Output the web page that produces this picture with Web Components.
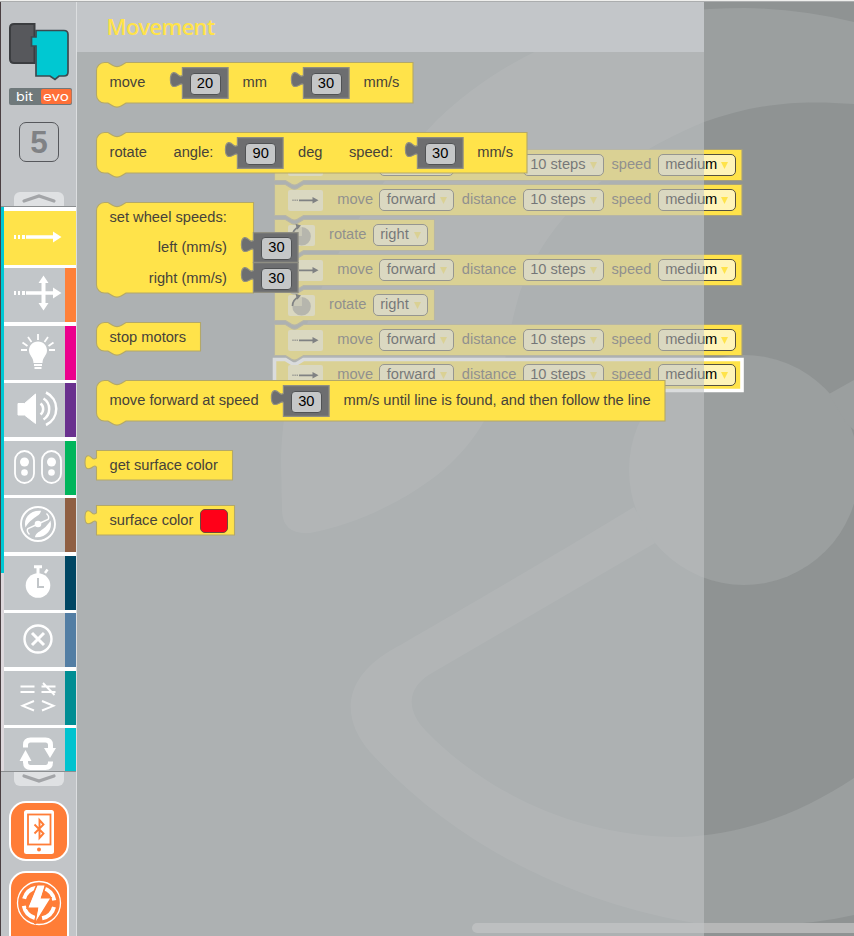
<!DOCTYPE html>
<html lang="en"><head><meta charset="utf-8"><title>Movement blocks</title>
<style>
html,body{margin:0;height:100%;overflow:hidden}
body{font:14.67px "Liberation Sans",Arial,sans-serif;background:#8f9393}
</style></head><body>
<block-editor></block-editor>
<script>
const define=(name,css,html,setup)=>customElements.define(name,class extends HTMLElement{
  constructor(){super();this.attachShadow({mode:'open'});}
  connectedCallback(){
    const g=this.getAttribute('g'),w=this.getAttribute('w');
    if(g)this.style.marginLeft=g+'px';
    if(w)this.style.width=w+'px';
    this.shadowRoot.innerHTML='<style>'+css+'</style>'+(typeof html==='function'?html(this):html);
    if(setup)setup(this);
  }
});

/* Text and fields that sit inside a block */
define('b-label',':host{display:block;flex:none;line-height:20px;white-space:nowrap;color:#46423a;margin-top:var(--label-top,10px)}','<slot></slot>');
define('b-num',`:host{display:block;flex:none;position:relative;width:46.5px;height:32px;margin-top:var(--num-top,5px)}
svg{position:absolute;left:-13px;top:0;overflow:visible}
.f{position:relative;margin:5.7px 0 0 8px;width:31px;height:22.6px;box-sizing:border-box;border:1.3px solid #505254;border-radius:4px;background:#c5c7c8;color:#000;text-align:center;line-height:18.4px}`,
el=>{const w=+(el.getAttribute('w')||46.5),h=+(el.getAttribute('h')||32);
return `<svg width="${w+13}" height="${h}"><path d="M13.4.6H${w+12.6}V${h-.6}H13.4V18.500C13 14.500 9 19.500 5 19.500C.3 19.500.3 6.500 4.500 5.700C8.500 5 10 11.500 13.400 8.500Z" fill="#6d6e70" stroke="#8f8e83" stroke-width="1.2"/></svg><div class="f"><slot></slot></div>`});
define('b-color',':host{display:block;flex:none;box-sizing:border-box;width:28px;height:23.500px;margin-top:4px;background:#ff0018;border:1.300px solid #6d4a3a;border-radius:5px}','');
define('b-drop',`:host{display:flex;flex:none;box-sizing:border-box;height:22px;margin-top:4.500px;border:1.300px solid #55513f;border-radius:5px;background:#fff4b8;color:#000;line-height:19.500px;padding-left:6.200px;justify-content:space-between;align-items:flex-start}
svg{margin:7.200px 6.500px 0 0}`,'<slot></slot><svg width="7" height="7"><path d="M0 0H7L3.500 7Z" fill="#ffe34a"/></svg>');
define('b-move-icon',':host{display:block;flex:none;width:35px;height:21px;margin-top:6px;background:#fff4b8;border-radius:2px}',
'<svg width="35" height="21" style="display:block"><g fill="#1e1e20"><path d="M4.500 9.500h1v1.600h-1zM6.600 9.500h1v1.600h-1zM8.700 9.500h1v1.600h-1zM11 9.500h14v1.700h-14zM24.500 7L30.500 10.300L24.500 13.600Z"/></g></svg>');
define('b-turn-icon',':host{display:block;flex:none;width:27px;height:21.500px;margin-top:5.500px;background:#fff4b8;border-radius:2px}',
'<svg width="27" height="22" style="display:block;overflow:visible"><path d="M13.500 2A9.300 9.300 0 1 1 4.300 11H13.500Z" fill="#a5a187"/><path d="M13.500 2A9.300 9.300 0 0 0 4.300 11H13.500Z" fill="#d8d0a0"/><path d="M4.500 11C4.500 7 7 3.500 11 2" fill="none" stroke="#1e1e20" stroke-width="1.700"/><path d="M7.500-1.200L13 .6L9 4.800Z" fill="#1e1e20"/></svg>');

/* Block body: stack blocks have a notch and a bump, value blocks a left tab */
define('b-block',`:host{display:block;position:relative;flex:none}
svg{position:absolute;left:0;top:0;overflow:visible}
.r{position:relative;display:flex;align-items:flex-start;height:100%}
:host([kind=col]) .r{display:block}
:host([kind=ws]),:host([kind=sel]){--label-top:5px}
:host([kind=value]){--label-top:5px}
:host([kind=small]){--label-top:5px}`,
el=>{const w=+el.getAttribute('w'),h=+el.getAttribute('h'),k=el.getAttribute('kind');
el.style.height=h+'px';
let d,extra='';
if(k==='value')d=`M.5.5H${w-.5}V${h-.5}H.5V17.500C0 15.500-2 15.500-4 17.500C-5 18.500-6.500 18.800-8 18.800C-12 18.500-12 6-8 5.700C-5 5.500-4.500 9-1.500 9L.5 8Z`;
else if(k==='ws'||k==='sel'){d=`M.5.5H11.500L17.500 4.200Q20.500 6 23.500 4.200L29.500.5H${w-.5}V${h-.5}H29.500L23.500 ${h+3.200}Q20.500 ${h+5} 17.500 ${h+3.200}L11.500 ${h-.5}H.5Z`;
 if(k==='sel')extra=`<path d="M.5.5H11.500L17.500 4.200Q20.500 6 23.500 4.200L29.500.5H${w-.5}V${h-.5}H.5Z" fill="none" stroke="#fff" stroke-width="3.600"/>`;}
else d=`M.5 8.500A8 8 0 0 1 8.500.5H12L16.500 3.300Q21 6 25.500 3.300L30 .5H${w-.5}V${h-.5}H30L25.500 ${h+2.300}Q21 ${h+5} 16.500 ${h+2.300}L12 ${h-.5}H8.500A8 8 0 0 1 .5 ${h-8.500}Z`;
return `<svg width="${w}" height="${h}"><path d="${d}" fill="#ffe34a" stroke="${k==='sel'?'#fff0a0':k==='ws'?'#a8a078':'#b3a868'}" stroke-width="1.100"/>${extra}</svg><div class="r"><slot></slot></div>`});
define('b-row',':host{display:flex;align-items:flex-start;width:203px;justify-content:flex-end;--num-top:0;--label-top:5.500px;height:30.500px}','<slot></slot>');

/* Workspace canvas with the watermark and the user program */
const mv=k=>`<b-block kind="${k}" w="468.500" h="32"><b-move-icon g="14"></b-move-icon><b-label g="14.700" w="36">move</b-label><b-drop g="6.300" w="75">forward</b-drop><b-label g="7.300" w="54">distance</b-label><b-drop g="7.200" w="81.500">10 steps</b-drop><b-label g="7" w="40">speed</b-label><b-drop g="6.500" w="78">medium</b-drop></b-block>`;
const rot='<b-block kind="ws" w="161" h="32"><b-turn-icon g="14"></b-turn-icon><b-label g="14.500" w="37">rotate</b-label><b-drop g="7" w="55">right</b-drop></b-block>';
define('work-space',`:host{display:block;position:absolute;inset:0;background:#8f9393;overflow:hidden}
.bg{position:absolute;inset:0}
.prog{position:absolute;left:273.500px;top:149.300px;display:flex;flex-direction:column;gap:3px}
.bar{position:absolute;left:472px;right:0;bottom:3px;height:10px;border-radius:5px 0 0 5px;background:#b6b7b7}`,
`<svg class="bg" width="854" height="936"><g fill="#9b9f9f">
<path d="M281 460C283 370 320 240 437 120C510 50 610 8 745 8Q800 9 854 22V104C790 99 750 106 704 122C600 165 545 225 520 292C510 325 507 350 503 372C498 402 478 438 450 464C412 499 355 525 310 533Q283 535 282 511Z"/>
<circle cx="744" cy="470" r="115"/>
<path d="M829 394L854 380V430L846 423ZM634 507L655 543L432 673C406 688 406 710 426 731C480 787 570 837 680 837C745 835 803 812 854 778V915Q790 930 700 924C580 905 460 850 370 752C344 722 340 684 385 654C430 628 520 576 634 507Z"/></g></svg>
<div class="prog">${mv('ws')+mv('ws')+rot+mv('ws')+rot+mv('ws')+mv('sel')}</div><div class="bar"></div>`);

/* Translucent flyout with the block palette */
define('fly-out',`:host{display:block;position:absolute;left:77px;top:2px;width:627px;bottom:0;background:rgba(193,197,198,.6)}
header{height:50px;box-sizing:border-box;background:#c3c6c9;padding:8px 0 0 29.500px;font:600 21.800px/34px "Open Sans","Noto Sans",sans-serif;letter-spacing:-.65px;color:#ffe34a;white-space:nowrap}
.list{display:flex;flex-direction:column;align-items:flex-start;padding:10px 0 0 18.500px}`,
`<header><slot name="title"></slot></header><div class="list"><slot></slot></div>`);

/* Category tile */
define('cat-tile',`:host{display:flex;flex:none;height:53.900px;background:#c2c6c9}
.i{flex:1;position:relative}.s{width:11px;background:var(--c)}
:host([on]){background:#ffe34a}svg{display:block;overflow:visible}`,
`<div class="i"><svg width="61" height="54" fill="none" stroke="#fff"></svg></div><div class="s"></div>`,
el=>{el.style.setProperty('--c',el.getAttribute('c'));el.shadowRoot.querySelector('svg').innerHTML=icons[el.getAttribute('icon')];});
const icons={
arrow:'<path d="M10 24h2v4h-2zM14 24h2v4h-2zM18 24h3v4h-3zM22 24.200H49V20.500L57.500 26L49 31.500V27.800H22Z" fill="#fff" stroke="none"/>',
cross:'<path d="M10 23h2v4h-2zM14 23h2v4h-2zM18 23h3v4h-3zM22 23.200H49V19.500L57.500 25L49 30.500V26.800H22ZM37.500 15H34.500L39.500 7.500L44.500 15H41.500V35H44.500L39.500 42.500L34.500 35H37.500Z" fill="#fff" stroke="none"/>',
bulb:'<path d="M34 15.500C39.500 15.500 43 19.500 43 24.500C43 29.500 38.500 31 38.500 37H29.500C29.500 31 25 29.500 25 24.500C25 19.500 28.500 15.500 34 15.500Z" fill="#fff" stroke="none"/><path d="M30 39H38M30.500 42H37.500" stroke-width="2"/><path d="M34 8V14M24 11L27.500 16M44 11L40.500 16M18.500 16.500L23.500 20M49.500 16.500L44.500 20M17 24H23M45 24H51" stroke-width="1.800"/>',
sound:'<path d="M14 20.500H20.500L31.500 11V40.500L20.500 32H14Z" fill="#fff" stroke-width="1"/><path d="M36.500 20.500A7 7 0 0 1 36.500 31.500M39.500 15.500A12.500 12.500 0 0 1 39.500 36.500M42 9.500A18 18 0 0 1 42 42" stroke-width="2.500"/>',
eyes:'<rect x="11" y="10" width="19" height="32" rx="9.500" stroke-width="1.800"/><rect x="38" y="10" width="19" height="32" rx="9.500" stroke-width="1.800"/><g fill="#fff" stroke="none"><circle cx="20.500" cy="21" r="4.500"/><circle cx="20.500" cy="31.500" r="3.300"/><circle cx="47.500" cy="21" r="4.500"/><circle cx="47.500" cy="31.500" r="3.300"/></g>',
wheel:'<circle cx="34" cy="26" r="17" stroke-width="1.900"/><circle cx="34" cy="26" r="3.300" fill="#fff" stroke="none"/><path d="M21.500 29.500C19 20 26 12 37 12.800C36 19 28 18.500 21.500 29.500ZM46.500 22.500C49 32 42 40 31 39.200C32 33 40 33.500 46.500 22.500Z" fill="#fff" stroke="none"/><path d="M34 26L24 30.500Q22 33 25.500 36.500M34 26L44 21.500Q46 19 42.500 15.500" stroke-width="1.400"/>',
clock:'<circle cx="34" cy="29.500" r="12.300" fill="#fff" stroke="none"/><path d="M30 10.800H38M34 11V18" stroke-width="3"/><path d="M41 17L43.500 13.500" stroke-width="2.500"/><path d="M34 22V31H40" stroke="#c2c6c9" stroke-width="2"/>',
close:'<circle cx="34" cy="26" r="13.500" stroke-width="2.400"/><path d="M28 20L40 32M40 20L28 32" stroke-width="3"/>',
logic:'<path d="M16.500 15.500H30.500M16.500 21H30.500M37.500 15.500H51.500M37.500 21H51.500M39 12L50.500 24" stroke-width="1.900"/><path d="M30 30L18.500 34.800L30 39.500M38 30L49.500 34.800L38 39.500" stroke-width="1.900"/>',
loop:'<path d="M21.500 19.500V17Q21.500 12 26.500 12H41.500Q46.500 12 46.500 17V21M46.500 33.500V34Q46.500 39.500 41.500 39.500H26.500Q21.500 39.500 21.500 34V30" stroke-width="5"/><path d="M40 20H52L46 30Z M15.500 33L21.500 22L27.500 33Z" fill="#fff" stroke="none"/>'
};

/* Left tool bar */
define('tool-bar',`:host{position:absolute;left:0;top:2px;bottom:0;width:77px;box-sizing:border-box;border-left:1px solid #4a3f42;border-right:1px solid #dcdee0;background:#c2c5c8;display:flex;flex-direction:column;overflow:hidden}
.logo{margin:20px 0 0 7px;display:block;flex:none}
.five{box-sizing:border-box;width:40px;height:40px;margin:16px 0 0 18px;border:1.500px solid #56585c;border-radius:7px;text-align:center;font:bold 31.500px/38px "Liberation Sans",sans-serif;color:#808285;flex:none}
.up,.dn{width:50px;height:14px;margin-left:13px;background:#dfe1e3;flex:none}
.up{margin-top:30px;border-radius:6px 6px 0 0}.dn{border-radius:0 0 6px 6px}
.up svg,.dn svg{display:block}
.tiles{box-sizing:border-box;border-top:1px solid #8b8e90;border-bottom:1px solid #8b8e90;height:566px;overflow:hidden;flex:none;background:#fff;position:relative;display:flex}
.edge{width:3px;background:linear-gradient(#00c8d4 0 366px,#ddd8dc 366px)}
.col{flex:1;padding-top:4px;display:flex;flex-direction:column;gap:3.600px}
.btn{margin-left:8px;display:block;flex:none}`,
`<svg class="logo" width="64" height="60"><path d="M26.500 2H6Q2 2 2 6V37Q2 41 6 41H26.500Z" fill="#57585c" stroke="#3b3d40" stroke-width="2"/><path d="M28 8.500H56Q60 8.500 60 12.500V50Q60 54 56 54H51L47 57.500L42 54H28V24H23.500V15H28Z" fill="#00c8d2" stroke="#3b4a50" stroke-width="1.700"/></svg>
<svg width="64" height="18" style="display:block;margin:6px 0 0 7.500px;flex:none" font-family="Inter,sans-serif"><rect width="63" height="17" rx="2" fill="#6f797b"/><rect x="32" y="1" width="30.500" height="15" rx="2" fill="#ff7038"/><text x="7" y="12.700" font-size="12" fill="#fff" textLength="17" lengthAdjust="spacingAndGlyphs">bit</text><text x="34" y="12.700" font-size="12" fill="#fff" textLength="26" lengthAdjust="spacingAndGlyphs">evo</text></svg>
<div class="five">5</div>
<div class="up"><svg width="50" height="14"><path d="M10 9L25 4L40 9" fill="none" stroke="#a3a5a8" stroke-width="3.200" stroke-linecap="round"/></svg></div>
<div class="tiles"><div class="edge"></div><div class="col">
<cat-tile on icon="arrow" c="#ffe34a"></cat-tile><cat-tile icon="cross" c="#ff8038"></cat-tile><cat-tile icon="bulb" c="#ec008c"></cat-tile><cat-tile icon="sound" c="#69308e"></cat-tile><cat-tile icon="eyes" c="#00b55b"></cat-tile><cat-tile icon="wheel" c="#8f5f43"></cat-tile><cat-tile icon="clock" c="#004663"></cat-tile><cat-tile icon="close" c="#537ea4"></cat-tile><cat-tile icon="logic" c="#008d93"></cat-tile><cat-tile icon="loop" c="#00c3cf"></cat-tile></div></div>
<div class="dn"><svg width="50" height="14"><path d="M10 4L25 9L40 4" fill="none" stroke="#a3a5a8" stroke-width="3.200" stroke-linecap="round"/></svg></div>
<svg class="btn" style="margin-top:15px" width="60" height="60"><rect x="1" y="1" width="58" height="58" rx="16" fill="#ff7d37" stroke="#fff" stroke-width="2"/><rect x="15" y="9" width="30" height="44" rx="2.500" fill="#fff"/><rect x="19" y="13.500" width="22.500" height="30" fill="none" stroke="#ff7d37" stroke-width="1.800"/><circle cx="30" cy="48.500" r="2" fill="#ff7d37"/><path d="M25.500 23.500L34.500 32.500L30.500 37V19L34.500 23.500L25.500 32.500" fill="none" stroke="#ff7d37" stroke-width="1.900"/></svg>
<svg class="btn" style="margin-top:10px" width="60" height="66"><rect x="1" y="1" width="58" height="84" rx="16" fill="#ff7d37" stroke="#fff" stroke-width="2"/><circle cx="30" cy="32" r="21.500" fill="none" stroke="#fff" stroke-width="1.300"/><circle cx="30" cy="32" r="15.500" fill="none" stroke="#fff" stroke-width="4" stroke-dasharray="17 7.350" stroke-dashoffset="-4"/><path d="M28 14H36.500L32.500 27H41.500L26 53L28.500 37H18.500Z" fill="#fff" stroke="#ff7d37" stroke-width="2"/><path d="M28.500 14.500H35.500L31.500 27.500H41L27 50L29.500 36.500H19.500Z" fill="#fff"/></svg>`);

define('block-editor',':host{display:block;position:relative;width:854px;height:936px;overflow:hidden}.top{position:absolute;left:0;right:0;top:0;height:1px;background:#efefed;border-bottom:1px solid #abadae}',
`<work-space></work-space><fly-out><span slot="title">Movement</span>
<b-block w="317.500" h="41.500" style="margin-bottom:28.500px"><b-label g="14" w="36">move</b-label><b-num g="36">20</b-num><b-label g="14.500" w="24">mm</b-label><b-num g="36">30</b-num><b-label g="14.500">mm/s</b-label></b-block>
<b-block w="431.500" h="41.500" style="margin-bottom:28.500px"><b-label g="14" w="38">rotate</b-label><b-label g="26" w="40">angle:</b-label><b-num g="23.700">90</b-num><b-label g="14.300" w="25">deg</b-label><b-label g="26" w="43">speed:</b-label><b-num g="24.700">30</b-num><b-label g="14">mm/s</b-label></b-block>
<b-block kind="col" w="158" h="91.500" style="margin-bottom:28.500px"><b-label g="14" style="--label-top:0;padding-top:4.500px;height:25px">set wheel speeds:</b-label><b-row><b-label>left (mm/s)</b-label><b-num g="26" w="45.500" h="31">30</b-num></b-row><b-row><b-label>right (mm/s)</b-label><b-num g="26" w="45.500" h="31">30</b-num></b-row></b-block>
<b-block kind="small" w="105" h="29.500" style="margin-bottom:28.500px"><b-label g="14">stop motors</b-label></b-block>
<b-block w="569.500" h="41.500" style="margin-bottom:28.500px"><b-label g="14" w="149">move forward at speed</b-label><b-num g="24.300">30</b-num><b-label g="14.200">mm/s until line is found, and then follow the line</b-label></b-block>
<b-block kind="value" w="137" h="30.500" style="margin-bottom:24.500px"><b-label g="14">get surface color</b-label></b-block>
<b-block kind="value" w="139" h="30.500"><b-label g="14" w="84">surface color</b-label><b-color g="6.500"></b-color></b-block>
</fly-out><tool-bar></tool-bar><div class="top"></div>`);
</script></body></html>
